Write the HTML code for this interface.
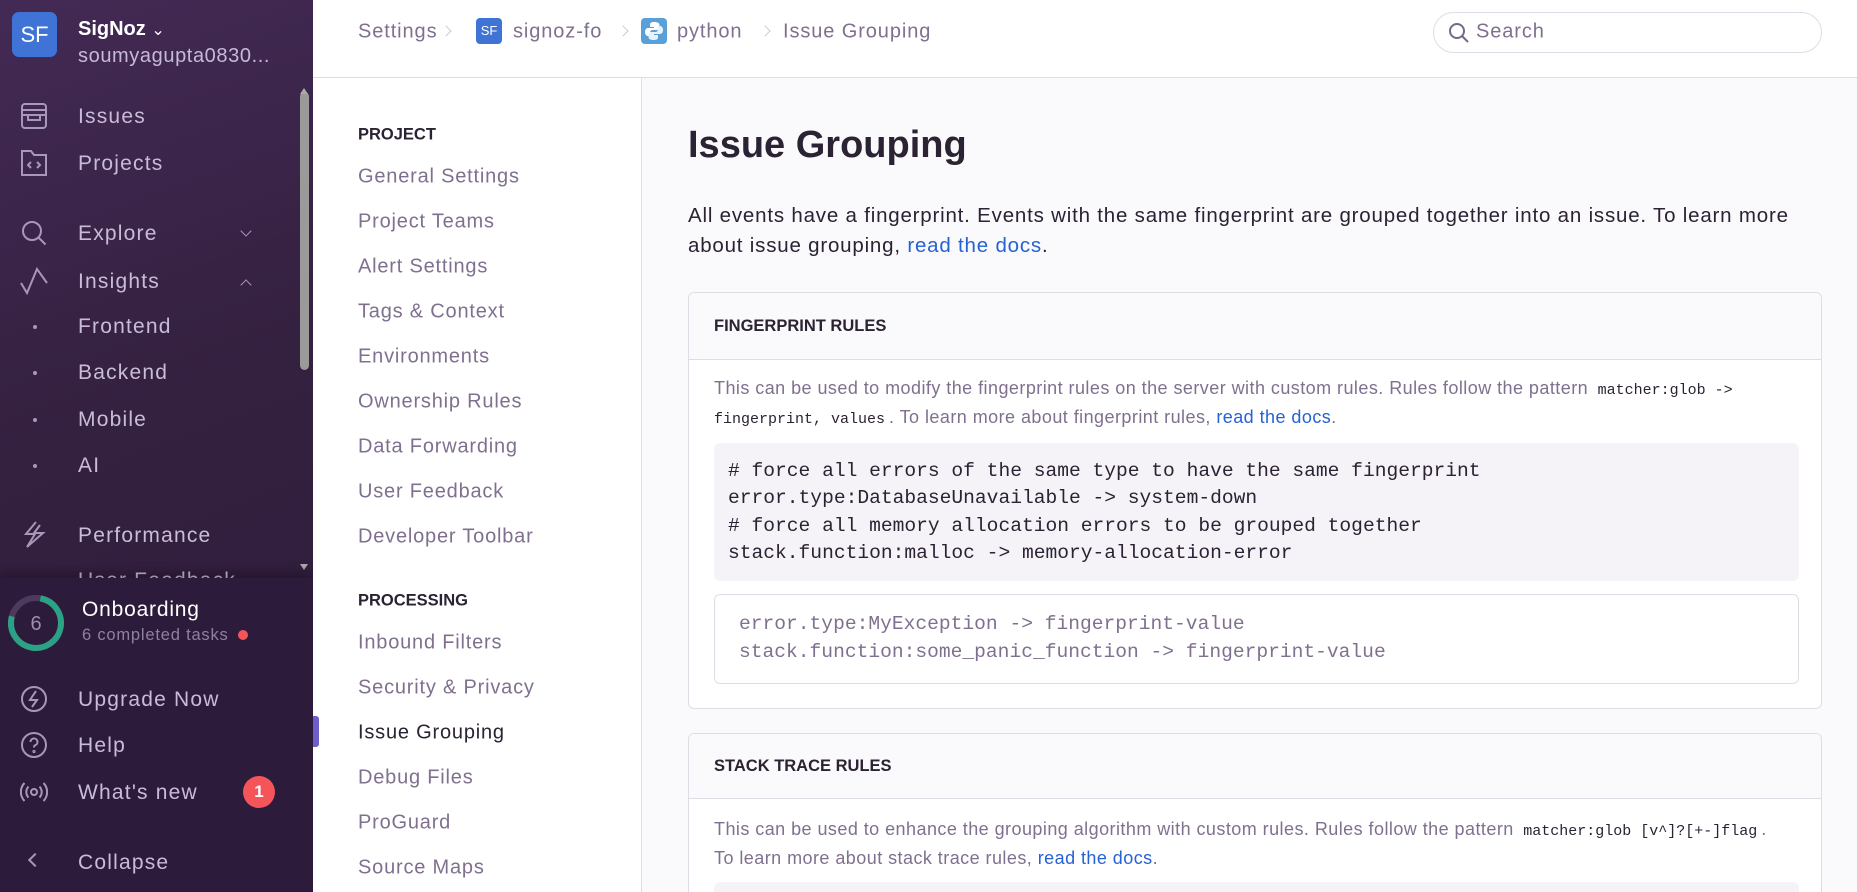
<!DOCTYPE html>
<html style="width:1857px;height:892px;overflow:hidden"><head><meta charset="utf-8"><style>
*{box-sizing:border-box;margin:0;padding:0}
body{width:1857px;height:892px;overflow:hidden;font-family:"Liberation Sans",sans-serif;background:#faf9fb;position:relative}
.a{position:absolute;white-space:nowrap}
#sb{position:absolute;left:0;top:0;width:313px;height:892px;background:linear-gradient(160deg,#432a55 0%,#34203f 45%,#2e1b3c 100%);overflow:hidden}
.nav{position:absolute;left:78px;font-size:21px;letter-spacing:1.2px;color:#c9bcd8;transform:translateY(-50%)}
.ic{position:absolute;left:20px;width:28px;height:28px;transform:translateY(-50%)}
.dot{position:absolute;left:33px;width:4px;height:4px;border-radius:2px;background:#a897b8}
#bot{position:absolute;left:0;top:578px;width:313px;height:314px;background:#2d1b3b;box-shadow:0 -6px 10px rgba(0,0,0,.25)}
#hdr{position:absolute;left:313px;top:0;right:0;height:78px;background:#fff;border-bottom:1px solid #e0dce5}
.bc{position:absolute;top:32px;transform:translateY(-50%);font-size:20px;letter-spacing:.9px;color:#80708f}
.chev{position:absolute;top:27px;width:8px;height:8px;border-top:1.5px solid #cfc8d6;border-right:1.5px solid #cfc8d6;transform:rotate(45deg)}
#sn{position:absolute;left:313px;top:78px;width:329px;height:814px;background:#fff;border-right:1px solid #e0dce5}
.si{position:absolute;left:45px;font-size:20px;letter-spacing:.8px;color:#80708f;transform:translateY(-50%)}
.sh{position:absolute;left:45px;font-size:16.5px;font-weight:bold;color:#2b2233;transform:translateY(-50%)}
.panel{position:absolute;left:688px;width:1134px;background:#fff;border:1px solid #e0dce5;border-radius:6px;overflow:hidden}
.ph{height:67px;background:#faf9fb;border-bottom:1px solid #e0dce5;padding-left:25px;font-size:16.5px;font-weight:bold;color:#2b2233;line-height:67px}
.desc{position:absolute;left:25px;font-size:18px;letter-spacing:.45px;color:#80708f;line-height:27px;width:1090px;white-space:normal}
.desc code{font-family:"Liberation Mono",monospace;font-size:15px;letter-spacing:0;color:#2b2233;padding:0 4px}
a{color:#2562d4;text-decoration:none}
.code{position:absolute;left:25px;width:1085px;background:#f5f3f7;border-radius:6px;font-family:"Liberation Mono",monospace;font-size:19.6px;color:#2b2233;line-height:27.3px;padding:15px 14px;white-space:pre}
</style></head><body>
<div id="sb">
 <div class="a" style="left:12px;top:12px;width:45px;height:45px;border-radius:7px;background:#3f73d6;color:#fff;font-size:22px;line-height:45px;text-align:center">SF</div>
 <div class="a" style="left:78px;top:18px;font-size:20px;font-weight:bold;color:#fff">SigNoz <span style="font-weight:normal;font-size:16px">&#8964;</span></div>
 <div class="a" style="left:78px;top:45px;font-size:20px;letter-spacing:.6px;color:#c7b9d8">soumyagupta0830...</div>
 <div class="a" style="left:300px;top:92px;width:9px;height:278px;border-radius:5px;background:#9a9a9a"></div>
 <div class="a" style="left:300px;top:88px;width:0;height:0;border:4px solid transparent;border-bottom:6px solid #aaa;border-top:0"></div>
 <div class="a" style="left:300px;top:564px;width:0;height:0;border:4px solid transparent;border-top:6px solid #aaa;border-bottom:0"></div>
 <svg class="ic" style="top:116px" viewBox="0 0 28 28" fill="none" stroke="#a897b8" stroke-width="2"><rect x="2" y="2" width="24" height="24" rx="3"/><path d="M2 8h24M2 13h24M8 13v5h12v-5"/></svg>
 <div class="nav" style="top:117px">Issues</div>
 <svg class="ic" style="top:163px" viewBox="0 0 28 28" fill="none" stroke="#a897b8" stroke-width="2"><path d="M2 2h9l3 4h12v20H2z"/><path d="M11 13l-3 3 3 3M17 13l3 3-3 3"/></svg>
 <div class="nav" style="top:164px">Projects</div>
 <svg class="ic" style="top:233px" viewBox="0 0 28 28" fill="none" stroke="#a897b8" stroke-width="2"><circle cx="12" cy="12" r="9"/><path d="M18.5 18.5l7 7"/></svg>
 <div class="nav" style="top:234px">Explore</div>
 <div class="a" style="left:242px;top:227px;width:8px;height:8px;border-right:1.5px solid #a897b8;border-bottom:1.5px solid #a897b8;transform:rotate(45deg)"></div>
 <svg class="ic" style="top:281px" viewBox="0 0 28 28" fill="none" stroke="#a897b8" stroke-width="2"><path d="M1 16l6 10L17 2l10 14"/></svg>
 <div class="nav" style="top:282px">Insights</div>
 <div class="a" style="left:242px;top:281px;width:8px;height:8px;border-left:1.5px solid #a897b8;border-top:1.5px solid #a897b8;transform:rotate(45deg)"></div>
 <div class="dot" style="top:325px"></div><div class="nav" style="top:327px">Frontend</div>
 <div class="dot" style="top:371px"></div><div class="nav" style="top:373px">Backend</div>
 <div class="dot" style="top:418px"></div><div class="nav" style="top:420px">Mobile</div>
 <div class="dot" style="top:464px"></div><div class="nav" style="top:466px">AI</div>
 <svg class="ic" style="top:535px" viewBox="0 0 28 28" fill="none" stroke="#a897b8" stroke-width="2"><path d="M16 1L6 13h9l-8 13 16-14h-9l6-8"/></svg>
 <div class="nav" style="top:536px">Performance</div>
 <div class="nav" style="top:581px">User Feedback</div>
 <div id="bot">
  <svg class="a" style="left:7px;top:16px" width="58" height="58" viewBox="0 0 58 58"><circle cx="29" cy="29" r="25" fill="none" stroke="#4e3a5e" stroke-width="6"/><circle cx="29" cy="29" r="25" fill="none" stroke="#2ba185" stroke-width="6" stroke-dasharray="120 157" transform="rotate(-80 29 29)"/><text x="29" y="36" text-anchor="middle" font-size="20" fill="#9d8fae" font-family="Liberation Sans">6</text></svg>
  <div class="a" style="left:82px;top:20px;font-size:21px;letter-spacing:.8px;color:#fff">Onboarding</div>
  <div class="a" style="left:82px;top:48px;font-size:16.5px;letter-spacing:.8px;color:#8f81a0">6 completed tasks <span style="display:inline-block;width:10px;height:10px;border-radius:5px;background:#f55459;margin-left:4px"></span></div>
  <svg class="ic" style="top:121px" viewBox="0 0 28 28" fill="none" stroke="#a897b8" stroke-width="2"><circle cx="14" cy="14" r="12"/><path d="M16 6l-6 9h7l-5 7"/></svg>
  <div class="nav" style="top:122px">Upgrade Now</div>
  <svg class="ic" style="top:167px" viewBox="0 0 28 28" fill="none" stroke="#a897b8" stroke-width="2"><circle cx="14" cy="14" r="12"/><path d="M10.5 11a3.5 3.5 0 1 1 4.5 3.3c-1 .4-1 1-1 2.2"/><circle cx="14" cy="20.5" r=".6"/></svg>
  <div class="nav" style="top:168px">Help</div>
  <svg class="ic" style="top:214px" viewBox="0 0 28 28" fill="none" stroke="#a897b8" stroke-width="2"><circle cx="14" cy="14" r="3"/><path d="M8.5 8.5a8 8 0 0 0 0 11M19.5 8.5a8 8 0 0 1 0 11M4.5 5a13 13 0 0 0 0 18M23.5 5a13 13 0 0 1 0 18"/></svg>
  <div class="nav" style="top:215px">What's new</div>
  <div class="a" style="left:243px;top:198px;width:32px;height:32px;border-radius:16px;background:#f55459;color:#fff;font-size:17px;font-weight:bold;line-height:32px;text-align:center">1</div>
  <div class="a" style="left:30px;top:277px;width:10px;height:10px;border-left:2px solid #a897b8;border-bottom:2px solid #a897b8;transform:rotate(45deg)"></div>
  <div class="nav" style="top:285px">Collapse</div>
 </div>
</div>
<div id="hdr">
 <div class="bc" style="left:45px">Settings</div>
 <div class="chev" style="left:129px"></div>
 <div class="a" style="left:163px;top:18px;width:26px;height:26px;border-radius:4px;background:#3f73d6;color:#fff;font-size:13px;line-height:26px;text-align:center">SF</div>
 <div class="bc" style="left:200px">signoz-fo</div>
 <div class="chev" style="left:306px"></div>
 <svg class="a" style="left:328px;top:18px" width="26" height="26" viewBox="0 0 26 26"><rect width="26" height="26" rx="4" fill="#5aa0d8"/><path d="M13 4c-4 0-4 2-4 3v2h4v1H7c-2 0-3 2-3 4s1 4 3 4h2v-3c0-2 1-3 3-3h4c1.5 0 2.5-1 2.5-2.5V7c0-2-2-3-5.5-3z" fill="#fff"/><path d="M13 22c4 0 4-2 4-3v-2h-4v-1h6c2 0 3-2 3-4s-1-4-3-4h-2v3c0 2-1 3-3 3h-4c-1.5 0-2.5 1-2.5 2.5V19c0 2 2 3 5.5 3z" fill="#e8f2fb"/></svg>
 <div class="bc" style="left:364px">python</div>
 <div class="chev" style="left:448px"></div>
 <div class="bc" style="left:470px">Issue Grouping</div>
 <div class="a" style="left:1120px;top:12px;width:389px;height:41px;border:1px solid #e0dce5;border-radius:21px;background:#fff"></div>
 <svg class="a" style="left:1134px;top:21px" width="24" height="24" viewBox="0 0 24 24" fill="none" stroke="#776889" stroke-width="2"><circle cx="10" cy="10" r="7"/><path d="M15 15l6 6"/></svg>
 <div class="bc" style="left:1163px;top:32px">Search</div>
</div>
<div id="sn">
 <div class="sh" style="top:57px">PROJECT</div>
 <div class="si" style="top:99px">General Settings</div>
 <div class="si" style="top:144px">Project Teams</div>
 <div class="si" style="top:189px">Alert Settings</div>
 <div class="si" style="top:234px">Tags &amp; Context</div>
 <div class="si" style="top:279px">Environments</div>
 <div class="si" style="top:324px">Ownership Rules</div>
 <div class="si" style="top:369px">Data Forwarding</div>
 <div class="si" style="top:414px">User Feedback</div>
 <div class="si" style="top:459px">Developer Toolbar</div>
 <div class="sh" style="top:523px">PROCESSING</div>
 <div class="si" style="top:565px">Inbound Filters</div>
 <div class="si" style="top:610px">Security &amp; Privacy</div>
 <div class="si" style="top:655px;color:#2b2233">Issue Grouping</div>
 <div class="a" style="left:0;top:638px;width:6px;height:31px;background:#6c5fc7;border-radius:0 3px 3px 0"></div>
 <div class="si" style="top:700px">Debug Files</div>
 <div class="si" style="top:745px">ProGuard</div>
 <div class="si" style="top:790px">Source Maps</div>
</div>
<div class="a" style="left:688px;top:124px;font-size:38px;font-weight:bold;color:#2b2233">Issue Grouping</div>
<div class="a" style="left:688px;top:201px;font-size:20.5px;letter-spacing:.8px;line-height:30px;color:#2b2233;white-space:normal;width:1120px">All events have a fingerprint. Events with the same fingerprint are grouped together into an issue. To learn more about issue grouping, <a>read the docs</a>.</div>
<div class="panel" style="top:292px;height:417px">
 <div class="ph">FINGERPRINT RULES</div>
 <div class="desc" style="top:82px">This can be used to modify the fingerprint rules on the server with custom rules. Rules follow the pattern <code>matcher:glob -&gt; fingerprint, values</code>. To learn more about fingerprint rules, <a>read the docs</a>.</div>
 <div class="code" style="top:150px;height:138px"># force all errors of the same type to have the same fingerprint
error.type:DatabaseUnavailable -&gt; system-down
# force all memory allocation errors to be grouped together
stack.function:malloc -&gt; memory-allocation-error</div>
 <div class="code" style="top:301px;height:90px;background:#fff;border:1px solid #e0dce5;color:#80708f;padding:15px 24px;line-height:28px">error.type:MyException -&gt; fingerprint-value
stack.function:some_panic_function -&gt; fingerprint-value</div>
</div>
<div class="panel" style="top:733px;height:159px;border-bottom:none;border-radius:6px 6px 0 0">
 <div class="ph" style="height:65px;line-height:65px">STACK TRACE RULES</div>
 <div class="desc" style="top:82px;width:1080px">This can be used to enhance the grouping algorithm with custom rules. Rules follow the pattern <code>matcher:glob [v^]?[+-]flag</code>.<br>To learn more about stack trace rules, <a>read the docs</a>.</div>
 <div class="code" style="top:148px;height:10px;border-radius:6px 6px 0 0;padding:0"></div>
</div>
</body></html>
